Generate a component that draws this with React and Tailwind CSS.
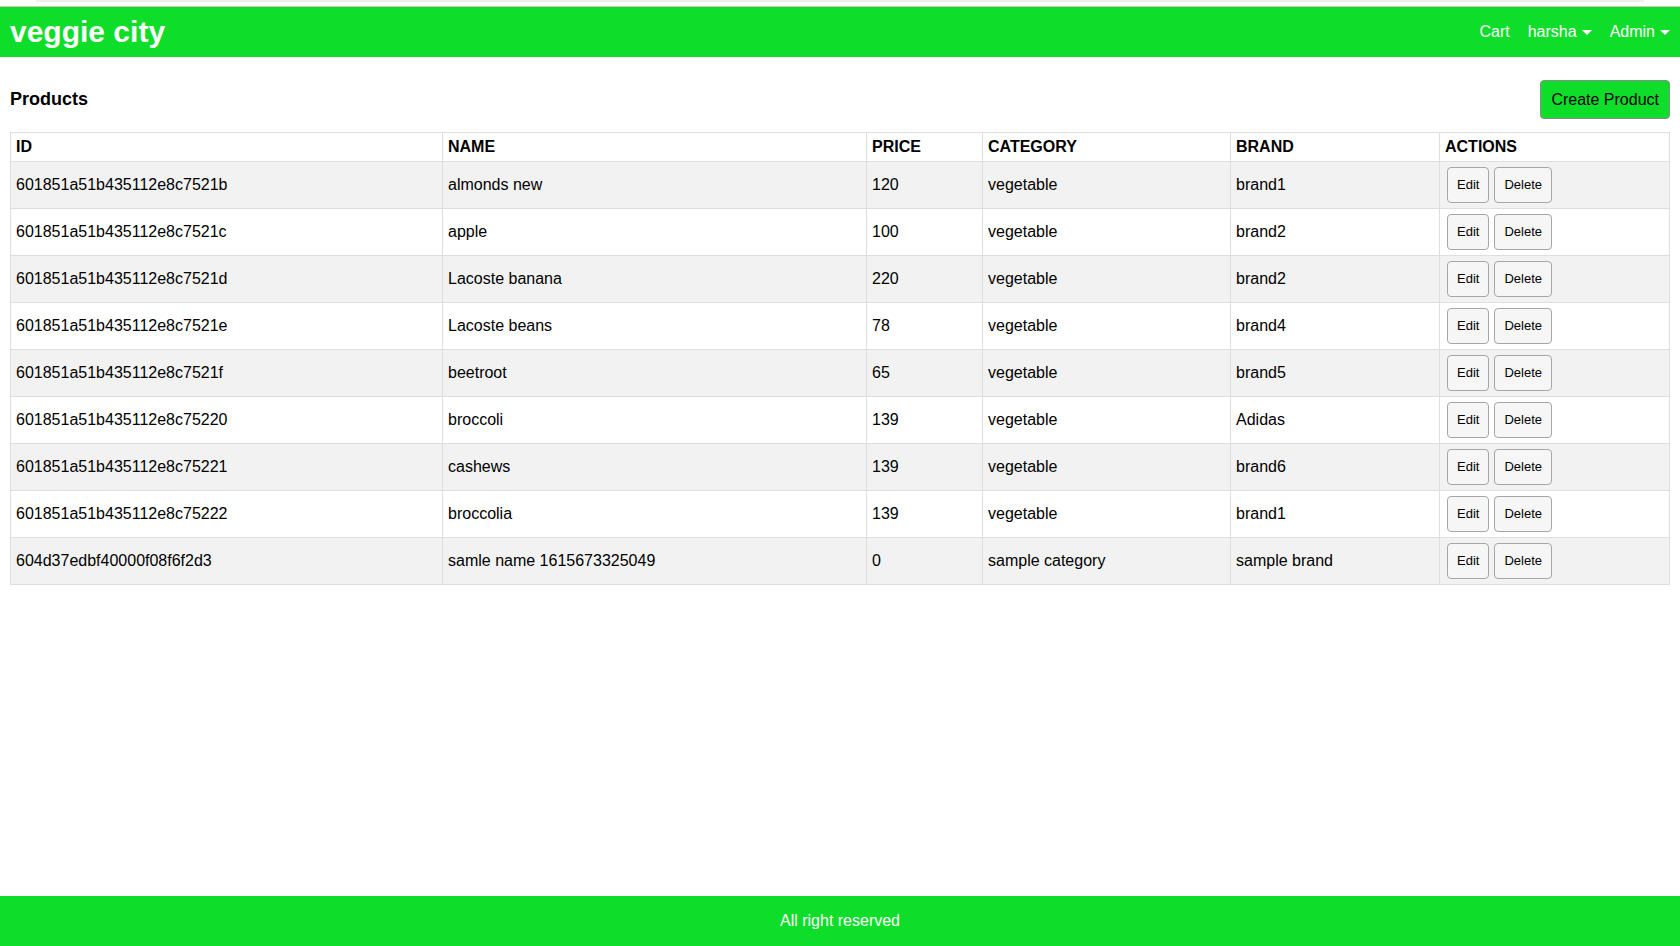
import React from "react";

const rows = [
  ["601851a51b435112e8c7521b", "almonds new", "120", "vegetable", "brand1"],
  ["601851a51b435112e8c7521c", "apple", "100", "vegetable", "brand2"],
  ["601851a51b435112e8c7521d", "Lacoste banana", "220", "vegetable", "brand2"],
  ["601851a51b435112e8c7521e", "Lacoste beans", "78", "vegetable", "brand4"],
  ["601851a51b435112e8c7521f", "beetroot", "65", "vegetable", "brand5"],
  ["601851a51b435112e8c75220", "broccoli", "139", "vegetable", "Adidas"],
  ["601851a51b435112e8c75221", "cashews", "139", "vegetable", "brand6"],
  ["601851a51b435112e8c75222", "broccolia", "139", "vegetable", "brand1"],
  ["604d37edbf40000f08f6f2d3", "samle name 1615673325049", "0", "sample category", "sample brand"],
];

function Caret() {
  return (
    <svg width="10" height="5" viewBox="0 0 10 5" className="ml-[5px] mt-[1px]">
      <path d="M0 0 L10 0 L5 5 Z" fill="white" />
    </svg>
  );
}

export default function App() {
  return (
    <div
      className="min-h-screen flex flex-col bg-white text-black"
      style={{ fontFamily: '"Liberation Sans", Arial, sans-serif' }}
    >
      <div className="h-[7px] bg-white border-b border-[#c8c8c8] flex justify-center">
        <div className="h-[2px] w-[1608px] bg-[#eeeeee] rounded-b-[3px]" />
      </div>
      <header className="h-[50px] bg-[#0edd29] flex items-center justify-between pl-[10px] pr-[10px]">
        <div className="text-white font-bold text-[30px] leading-none">veggie city</div>
        <nav className="flex items-center text-white text-[16px] gap-[18px]">
          <span>Cart</span>
          <span className="flex items-center">harsha<Caret /></span>
          <span className="flex items-center">Admin<Caret /></span>
        </nav>
      </header>

      <main className="flex-1 px-[10px]">
        <div className="flex items-center justify-between pt-[23px] mb-[13px]">
          <h1 className="font-bold text-[18px] leading-none mt-[-2px]">Products</h1>
          <button className="h-[39px] px-[10px] bg-[#0edd29] border border-[#8a8a8a] rounded-[4px] text-[16px] text-black">
            Create Product
          </button>
        </div>
        <table className="w-full table-fixed border-collapse text-[16px]">
          <colgroup>
            <col className="w-[432px]" />
            <col className="w-[424px]" />
            <col className="w-[116px]" />
            <col className="w-[248px]" />
            <col className="w-[209px]" />
            <col className="w-[230px]" />
          </colgroup>
          <thead>
            <tr className="h-[29px]">
              {["ID", "NAME", "PRICE", "CATEGORY", "BRAND", "ACTIONS"].map((h) => (
                <th
                  key={h}
                  className="border border-[#dedede] text-left font-bold px-[5px] py-[4px] leading-[18px]"
                >
                  {h}
                </th>
              ))}
            </tr>
          </thead>
          <tbody>
            {rows.map((r, i) => (
              <tr key={r[0]} className={`h-[47px] ${i % 2 === 0 ? "bg-[#f2f2f2]" : "bg-white"}`}>
                {r.map((c, j) => (
                  <td key={j} className="border border-[#dedede] px-[5px] py-0 align-middle">
                    {c}
                  </td>
                ))}
                <td className="border border-[#dedede] px-[5px] py-0 align-middle">
                  <div className="flex gap-[5px] pl-[2px]">
                    <button className="h-[36px] px-[9px] bg-[#f6f6f6] border border-[#a6a6a6] rounded-[4px] text-[13px] text-black">
                      Edit
                    </button>
                    <button className="h-[36px] px-[9px] bg-[#f6f6f6] border border-[#a6a6a6] rounded-[4px] text-[13px] text-black">
                      Delete
                    </button>
                  </div>
                </td>
              </tr>
            ))}
          </tbody>
        </table>
      </main>

      <footer className="h-[50px] bg-[#0edd29] flex items-center justify-center text-white text-[16px]">
        All right reserved
      </footer>
    </div>
  );
}
